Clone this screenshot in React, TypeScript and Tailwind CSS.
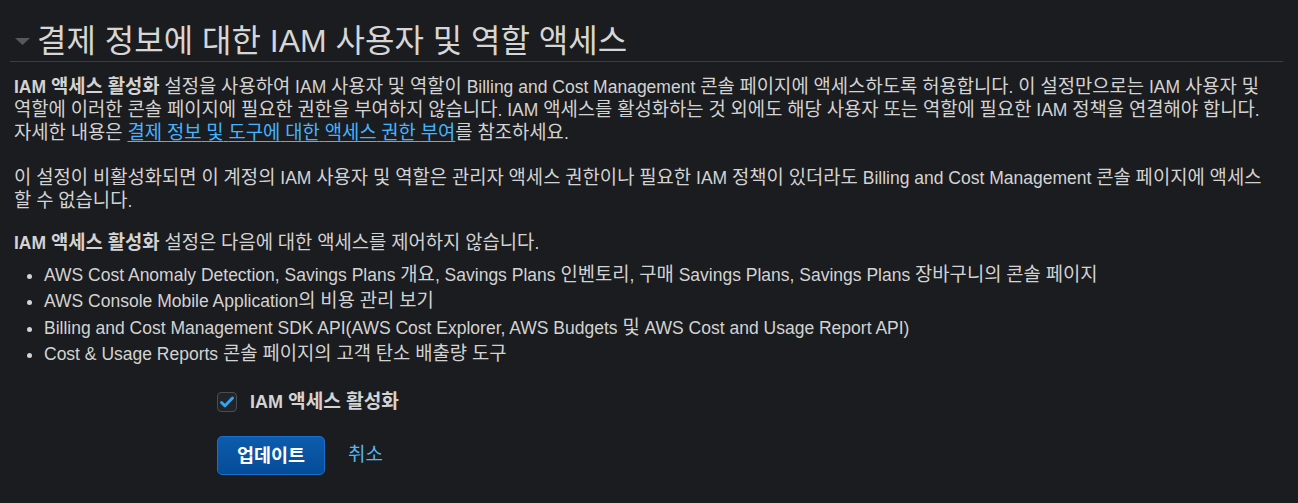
import React from "react";

const font = { fontFamily: "'Liberation Sans', 'Noto Sans CJK KR', sans-serif" };

function k(text: string, big: "p" | "b" = "p") {
  const parts = text.split(/([\uAC00-\uD7A3\u3131-\u318E]+)/);
  const cls = big === "p" ? "text-[18.8px] leading-[0px]" : "text-[19.2px] leading-[0px]";
  return parts.map((s, i) =>
    i % 2 === 1 ? (
      <span key={i} className={cls}>
        {s}
      </span>
    ) : (
      <React.Fragment key={i}>{s}</React.Fragment>
    )
  );
}

export default function App() {
  return (
    <div className="min-h-[503px] w-full bg-[#1b1c1f] text-[#d3d3d3]" style={font}>
      <div className="pl-[10px] pt-[20px]">
        <div className="mr-[15px] flex h-[42px] items-center border-b border-[#3d3e42]">
          <svg width="20" height="12" viewBox="0 0 20 12" className="mr-[7px] mt-[2px]">
            <polygon points="5,2 20,2 12.5,9" fill="#56585c" />
          </svg>
          <h1 className="whitespace-nowrap text-[32px] leading-[40px] font-normal text-[#d6d6d6]">
            결제 정보에 대한 IAM 사용자 및 역할 액세스
          </h1>
        </div>
        <div className="whitespace-nowrap pl-[4px] pt-[14px] text-[17.5px] leading-[23px]">
          <p>
            <b className="font-bold">{k("IAM 액세스 활성화")}</b>
            {k(" 설정을 사용하여 IAM 사용자 및 역할이 Billing and Cost Management 콘솔 페이지에 액세스하도록 허용합니다. 이 설정만으로는 IAM 사용자 및")}
            <br />
            {k("역할에 이러한 콘솔 페이지에 필요한 권한을 부여하지 않습니다. IAM 액세스를 활성화하는 것 외에도 해당 사용자 또는 역할에 필요한 IAM 정책을 연결해야 합니다.")}
            <br />
            {k("자세한 내용은 ")}
            <a href="#" className="text-[#44b4ff] underline underline-offset-[2px]">
              {k("결제 정보 및 도구에 대한 액세스 권한 부여")}
            </a>
            {k("를 참조하세요.")}
          </p>
          <p className="mt-[22px]">
            {k("이 설정이 비활성화되면 이 계정의 IAM 사용자 및 역할은 관리자 액세스 권한이나 필요한 IAM 정책이 있더라도 Billing and Cost Management 콘솔 페이지에 액세스")}
            <br />
            {k("할 수 없습니다.")}
          </p>
          <p className="mt-[19px]">
            <b className="font-bold">{k("IAM 액세스 활성화")}</b>
            {k(" 설정은 다음에 대한 액세스를 제어하지 않습니다.")}
          </p>
          <ul className="mt-[7px] list-disc pl-[30px] leading-[26.3px]">
            <li>{k("AWS Cost Anomaly Detection, Savings Plans 개요, Savings Plans 인벤토리, 구매 Savings Plans, Savings Plans 장바구니의 콘솔 페이지")}</li>
            <li>{k("AWS Console Mobile Application의 비용 관리 보기")}</li>
            <li>{k("Billing and Cost Management SDK API(AWS Cost Explorer, AWS Budgets 및 AWS Cost and Usage Report API)")}</li>
            <li>{k("Cost & Usage Reports 콘솔 페이지의 고객 탄소 배출량 도구")}</li>
          </ul>
        </div>
        <div className="ml-[207px] mt-[25px] flex flex-col items-start">
          <label className="flex h-[20px] items-center gap-[13px]">
            <span className="flex h-[20px] w-[20px] items-center justify-center rounded-[4px] border border-[#4b4d52] bg-[#232428]">
              <svg width="16" height="14" viewBox="0 0 16 14">
                <path d="M2.5 7.5 L6 10.8 L13.5 3" stroke="#2ea6f5" strokeWidth="3" fill="none" strokeLinecap="round" strokeLinejoin="round" />
              </svg>
            </span>
            <span className="text-[18px] font-bold text-[#d3d3d3]">{k("IAM 액세스 활성화", "b")}</span>
          </label>
          <div className="mt-[24px] flex items-center gap-[23px]">
            <button className="h-[39px] w-[108px] rounded-[5px] border border-[#1b6fcc] bg-gradient-to-b from-[#0d5cad] to-[#054c98] text-[18.5px] font-bold text-white">
              업데이트
            </button>
            <a href="#" className="text-[19px] text-[#55b6f5]">취소</a>
          </div>
        </div>
      </div>
    </div>
  );
}
